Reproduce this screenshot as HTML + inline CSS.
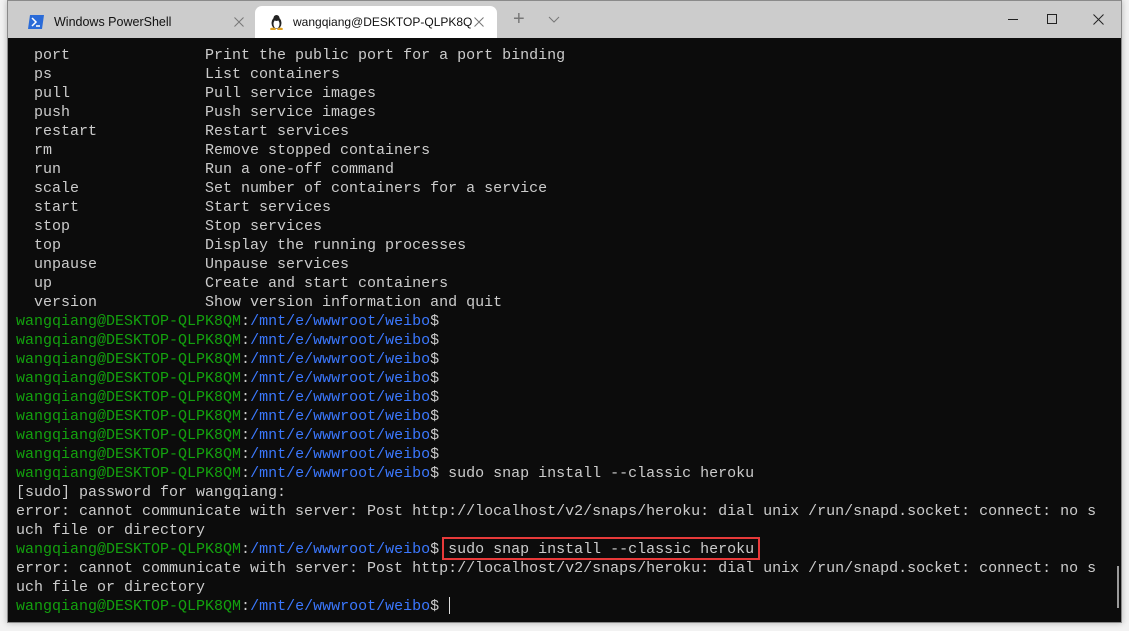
<!DOCTYPE html>
<html><head><meta charset="utf-8"><style>
*{margin:0;padding:0;box-sizing:border-box}
body{width:1129px;height:631px;background:#f2f2f2;position:relative;overflow:hidden;font-family:"Liberation Sans",sans-serif}
.win{position:absolute;left:7px;top:0;width:1115px;height:623px;border:1px solid #8a8a8a;background:#0c0c0c;box-shadow:0 0 6px rgba(0,0,0,.25)}
.bar{position:absolute;left:0;top:0;right:0;height:37px;background:#cccccc}
.tab{position:absolute;top:5px;height:32px;font-size:12.5px;color:#111;line-height:32px;white-space:nowrap}
.t1{left:0;width:240px}
.t2{left:247px;width:242px;background:#fff;border-radius:7px 7px 0 0;font-size:12px}
.x{position:absolute;top:11px}
pre{position:absolute;left:8px;top:45px;font-family:"Liberation Mono",monospace;font-size:15px;line-height:19px;color:#cccccc}
.g{color:#13a10e}
.b{color:#3b78ff}
.box{position:absolute;left:434px;top:536px;width:318px;height:23px;border:2px solid #e83a3a}
.scroll{position:absolute;left:1109px;top:565px;width:2px;height:42px;background:#9a9a9a}
.cur{position:absolute;left:441px;top:596px;width:1px;height:17px;background:#ddd}
</style></head><body>
<div class="win">
<div class="bar">
 <div class="tab t1"><svg style="position:absolute;left:20px;top:9px" width="16" height="14" viewBox="0 0 16 14"><path d="M2 0H16L14 14H0Z" fill="#2a6bd8"/><path d="M4 3L8 7L4 11" stroke="#fff" stroke-width="1.5" fill="none"/><path d="M8 11H12" stroke="#fff" stroke-width="1.5"/></svg><span style="position:absolute;left:46px">Windows PowerShell</span><svg class="x" style="left:226px" width="10" height="10"><path d="M0.5 0.5L9.5 9.5M9.5 0.5L0.5 9.5" stroke="#777"/></svg></div>
 <div class="tab t2"><svg style="position:absolute;left:15px;top:8px" width="13" height="16" viewBox="0 0 13 16"><ellipse cx="6.5" cy="9" rx="5" ry="6" fill="#222"/><ellipse cx="6.5" cy="10" rx="3" ry="4.5" fill="#fff"/><circle cx="6.5" cy="4" r="3" fill="#222"/><ellipse cx="3" cy="15" rx="3" ry="1.4" fill="#e0a020"/><ellipse cx="10" cy="15" rx="3" ry="1.4" fill="#e0a020"/></svg><span style="position:absolute;left:38px">wangqiang@DESKTOP-QLPK8Q</span><svg class="x" style="left:219px" width="10" height="10"><path d="M0.5 0.5L9.5 9.5M9.5 0.5L0.5 9.5" stroke="#777"/></svg></div>
 <span style="position:absolute;left:505px;top:7px;font-size:20px;color:#777;font-weight:300">+</span>
 <svg style="position:absolute;left:540px;top:15px" width="12" height="7"><path d="M1 1L6 6L11 1" stroke="#777" fill="none"/></svg>
 <div style="position:absolute;left:1000px;top:18px;width:10px;height:1px;background:#222"></div>
 <div style="position:absolute;left:1039px;top:13px;width:10px;height:10px;border:1px solid #222"></div>
 <svg style="position:absolute;left:1085px;top:13px" width="11" height="11"><path d="M0.5 0.5L10.5 10.5M10.5 0.5L0.5 10.5" stroke="#222"/></svg>
</div>
<pre>  port               Print the public port for a port binding
  ps                 List containers
  pull               Pull service images
  push               Push service images
  restart            Restart services
  rm                 Remove stopped containers
  run                Run a one-off command
  scale              Set number of containers for a service
  start              Start services
  stop               Stop services
  top                Display the running processes
  unpause            Unpause services
  up                 Create and start containers
  version            Show version information and quit
<span class="g">wangqiang@DESKTOP-QLPK8QM</span>:<span class="b">/mnt/e/wwwroot/weibo</span>$
<span class="g">wangqiang@DESKTOP-QLPK8QM</span>:<span class="b">/mnt/e/wwwroot/weibo</span>$
<span class="g">wangqiang@DESKTOP-QLPK8QM</span>:<span class="b">/mnt/e/wwwroot/weibo</span>$
<span class="g">wangqiang@DESKTOP-QLPK8QM</span>:<span class="b">/mnt/e/wwwroot/weibo</span>$
<span class="g">wangqiang@DESKTOP-QLPK8QM</span>:<span class="b">/mnt/e/wwwroot/weibo</span>$
<span class="g">wangqiang@DESKTOP-QLPK8QM</span>:<span class="b">/mnt/e/wwwroot/weibo</span>$
<span class="g">wangqiang@DESKTOP-QLPK8QM</span>:<span class="b">/mnt/e/wwwroot/weibo</span>$
<span class="g">wangqiang@DESKTOP-QLPK8QM</span>:<span class="b">/mnt/e/wwwroot/weibo</span>$
<span class="g">wangqiang@DESKTOP-QLPK8QM</span>:<span class="b">/mnt/e/wwwroot/weibo</span>$ sudo snap install --classic heroku
[sudo] password for wangqiang:
error: cannot communicate with server: Post http://localhost/v2/snaps/heroku: dial unix /run/snapd.socket: connect: no s
uch file or directory
<span class="g">wangqiang@DESKTOP-QLPK8QM</span>:<span class="b">/mnt/e/wwwroot/weibo</span>$ sudo snap install --classic heroku
error: cannot communicate with server: Post http://localhost/v2/snaps/heroku: dial unix /run/snapd.socket: connect: no s
uch file or directory
<span class="g">wangqiang@DESKTOP-QLPK8QM</span>:<span class="b">/mnt/e/wwwroot/weibo</span>$</pre>
<div class="box"></div>
<div class="cur"></div>
<div class="scroll"></div>
</div>
</body></html>
